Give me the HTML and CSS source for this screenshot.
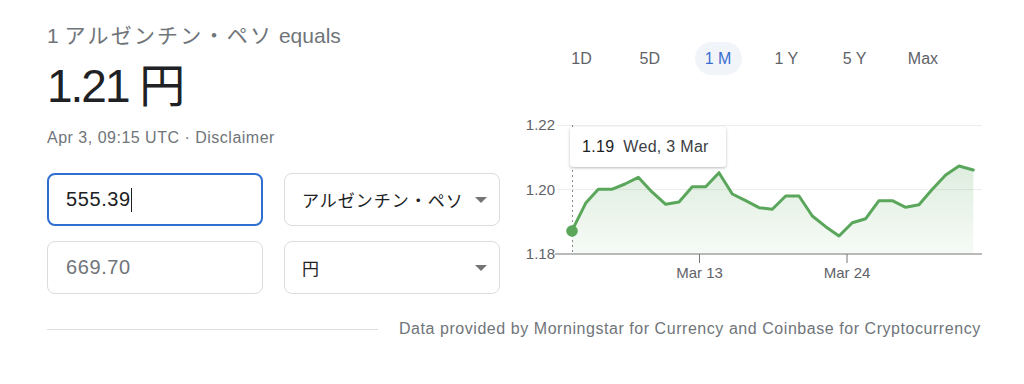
FILE: index.html
```html
<!DOCTYPE html>
<html lang="ja">
<head>
<meta charset="utf-8">
<title>Currency converter</title>
<link rel="stylesheet" href="styles.css">
</head>
<body>
<div class="wrap">
  <div class="left">
    <div class="headline">1 <span class="jp">アルゼンチン・ペソ</span> equals</div>
    <div class="big">1.21 円</div>
    <div class="meta">Apr 3, 09:15 UTC · Disclaimer</div>
    <div class="form">
      <div class="field focused"><span class="val">555.39</span><span class="caret"></span></div>
      <div class="field select"><span class="sel">アルゼンチン・ペソ</span><span class="arrow"></span></div>
      <div class="field"><span class="val muted">669.70</span></div>
      <div class="field select"><span class="sel">円</span><span class="arrow"></span></div>
    </div>
  </div>
  <div class="right">
    <div class="tabs">
      <span class="tab">1D</span>
      <span class="tab">5D</span>
      <span class="tab active">1 M</span>
      <span class="tab">1 Y</span>
      <span class="tab">5 Y</span>
      <span class="tab">Max</span>
    </div>
    <div class="chart">
      <svg class="plot" width="500" height="180" viewBox="0 0 500 180">
        <defs>
          <linearGradient id="fillg" x1="0" y1="0" x2="0" y2="1">
            <stop offset="0" stop-color="#5aa75c" stop-opacity="0.2"/>
            <stop offset="1" stop-color="#5aa75c" stop-opacity="0.05"/>
          </linearGradient>
        </defs>
        <g transform="translate(-500,-110)">
          <line x1="557" y1="125.5" x2="982" y2="125.5" stroke="#eeeeee" stroke-width="1"/>
          <line x1="557" y1="189.5" x2="982" y2="189.5" stroke="#eeeeee" stroke-width="1"/>
          <text x="555" y="130" class="ylab" text-anchor="end">1.22</text>
          <text x="555" y="194.5" class="ylab" text-anchor="end">1.20</text>
          <text x="555" y="259" class="ylab" text-anchor="end">1.18</text>
          <polygon fill="url(#fillg)" points="572,230.7 586,202.7 598.3,189.3 611.7,189.3 625,184 638.3,177.3 651.7,191.7 665.7,204.3 679,202 692.3,186.7 705.7,186.7 719,172.7 732.3,194 745.7,200.7 759,207.7 772.3,209.3 785.7,196 799,196 812.3,216 825.7,226.7 839,236 852.3,222.7 865.7,218.7 879,200.7 892.3,200.7 905.7,207.3 919,204.7 932.3,189.3 945.7,175 959,166 973.3,170 973.3,254 572,254"/>
          <line x1="572.5" y1="125" x2="572.5" y2="254" stroke="#888" stroke-width="1" stroke-dasharray="2,3"/>
          <line x1="555" y1="254" x2="982" y2="254" stroke="#777" stroke-width="1.2"/>
          <line x1="699.5" y1="254" x2="699.5" y2="263" stroke="#777" stroke-width="1"/>
          <line x1="847" y1="254" x2="847" y2="263" stroke="#777" stroke-width="1"/>
          <text x="699.5" y="278" class="xlab" text-anchor="middle">Mar 13</text>
          <text x="847" y="278" class="xlab" text-anchor="middle">Mar 24</text>
          <polyline fill="none" stroke="#5aa75c" stroke-width="3" stroke-linejoin="round" stroke-linecap="round" points="572,230.7 586,202.7 598.3,189.3 611.7,189.3 625,184 638.3,177.3 651.7,191.7 665.7,204.3 679,202 692.3,186.7 705.7,186.7 719,172.7 732.3,194 745.7,200.7 759,207.7 772.3,209.3 785.7,196 799,196 812.3,216 825.7,226.7 839,236 852.3,222.7 865.7,218.7 879,200.7 892.3,200.7 905.7,207.3 919,204.7 932.3,189.3 945.7,175 959,166 973.3,170"/>
          <circle cx="572" cy="231" r="5.8" fill="#5aa75c"/>
        </g>
      </svg>
      <div class="tooltip"><span class="tv">1.19</span><span class="td">Wed, 3 Mar</span></div>
    </div>
  </div>
</div>
<div class="footer">
  <div class="rule"></div>
  <div class="source">Data provided by Morningstar for Currency and Coinbase for Cryptocurrency</div>
</div>
</body>
</html>
```
FILE: styles.css
```css
* { box-sizing: border-box; }
html, body { margin: 0; padding: 0; background: #ffffff; }
body {
  width: 1024px;
  height: 384px;
  overflow: hidden;
  font-family: "Liberation Sans", Arial, "Noto Sans CJK JP", sans-serif;
  color: #202124;
}
.wrap {
  display: flex;
  height: 312px;
}
.left {
  width: 500px;
  padding-left: 47px;
  padding-top: 24px;
}
.headline {
  font-size: 21px;
  line-height: 24px;
  color: #70757a;
  white-space: nowrap;
}
.jp { letter-spacing: 2.2px; }
.big {
  margin-top: 10px;
  font-size: 46px;
  line-height: 56px;
  letter-spacing: -2px;
  color: #202124;
  white-space: nowrap;
}
.meta {
  margin-top: 14px;
  font-size: 16px;
  line-height: 20px;
  letter-spacing: 0.5px;
  color: #70757a;
}
.form {
  margin-top: 25px;
  display: grid;
  grid-template-columns: 216px 216px;
  grid-auto-rows: 53px;
  column-gap: 21px;
  row-gap: 15px;
}
.field {
  border: 1px solid #dadce0;
  border-radius: 8px;
  display: flex;
  align-items: center;
  padding-left: 18px;
  padding-right: 12px;
}
.field.focused {
  border: 2px solid #2f6fd0;
  padding-left: 17px;
}
.val {
  font-size: 20px;
  letter-spacing: 0.6px;
  color: #202124;
}
.val.muted { color: #70757a; }
.caret {
  display: inline-block;
  width: 1px;
  height: 24px;
  background: #202124;
  margin-left: 0;
}
.select { justify-content: space-between; padding-left: 17px; }
.sel {
  font-size: 17px;
  letter-spacing: 1px;
  color: #202124;
  white-space: nowrap;
}
.arrow {
  width: 0;
  height: 0;
  border-left: 6.5px solid transparent;
  border-right: 6.5px solid transparent;
  border-top: 6px solid #757575;
}
.right {
  width: 524px;
  padding-top: 42px;
}
.tabs {
  display: flex;
  padding-left: 58px;
  gap: 21.3px;
  height: 33px;
}
.tab {
  width: 47px;
  height: 33px;
  border-radius: 17px;
  display: flex;
  align-items: center;
  justify-content: center;
  font-size: 16px;
  color: #5f6368;
}
.tab.active {
  background: #f1f4f9;
  color: #3a6fd1;
}
.chart {
  position: relative;
  margin-top: 35px;
  width: 500px;
  height: 180px;
}
.plot { display: block; }
.ylab, .xlab {
  font-family: "Liberation Sans", Arial, sans-serif;
  font-size: 15px;
  fill: #5f6368;
}
.tooltip {
  position: absolute;
  left: 70px;
  top: 17px;
  width: 156px;
  height: 40px;
  background: #ffffff;
  border-radius: 3px;
  box-shadow: 0 1px 3px rgba(0,0,0,0.28);
  display: flex;
  align-items: center;
  padding-left: 12px;
  font-size: 16px;
  letter-spacing: 0.3px;
  white-space: nowrap;
}
.tv { color: #202124; margin-right: 9px; }
.td { color: #3c4043; }
.footer {
  display: flex;
  align-items: center;
  padding-left: 47px;
  margin-top: 5px;
  height: 24px;
}
.rule {
  width: 331px;
  height: 1px;
  background: #dadce0;
}
.source {
  margin-left: 21px;
  font-size: 16px;
  letter-spacing: 0.55px;
  color: #70757a;
  white-space: nowrap;
}
```
